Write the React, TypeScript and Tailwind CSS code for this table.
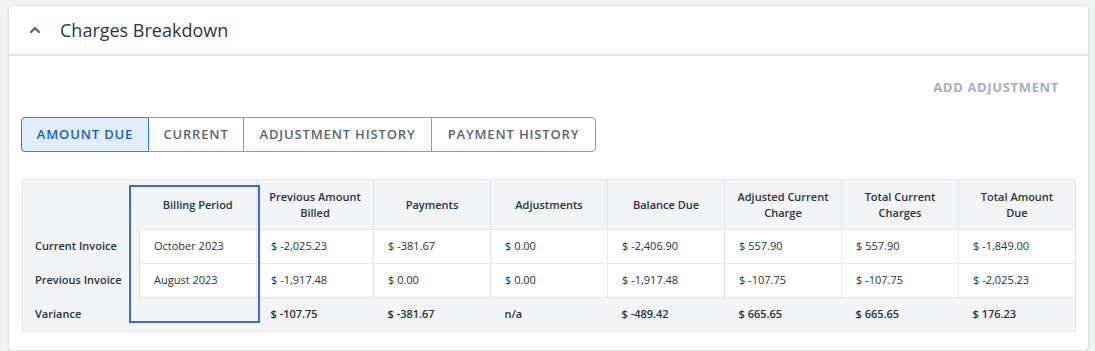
import React, { useState } from 'react';
import { ChevronUp } from 'lucide-react';

const tabs = [
  { label: 'AMOUNT DUE', w: 'w-[128px]' },
  { label: 'CURRENT', w: 'w-[96px]' },
  { label: 'ADJUSTMENT HISTORY', w: 'w-[189px]' },
  { label: 'PAYMENT HISTORY', w: 'w-[165px]' },
];

const headers = [
  'Billing Period',
  'Previous Amount Billed',
  'Payments',
  'Adjustments',
  'Balance Due',
  'Adjusted Current Charge',
  'Total Current Charges',
  'Total Amount Due',
];

const rows = [
  {
    label: 'Current Invoice',
    values: ['October 2023', '$ -2,025.23', '$ -381.67', '$ 0.00', '$ -2,406.90', '$ 557.90', '$ 557.90', '$ -1,849.00'],
  },
  {
    label: 'Previous Invoice',
    values: ['August 2023', '$ -1,917.48', '$ 0.00', '$ 0.00', '$ -1,917.48', '$ -107.75', '$ -107.75', '$ -2,025.23'],
  },
];

const variance = ['', '$ -107.75', '$ -381.67', 'n/a', '$ -489.42', '$ 665.65', '$ 665.65', '$ 176.23'];

export default function App() {
  const [active, setActive] = useState(0);

  return (
    <div className="min-h-[351px] bg-[#f1f2f2] pt-[5px] pl-[8px] pr-[6px] font-['Open_Sans',sans-serif] text-[#2b3340]">
      <div className="bg-white border border-[#e1e3e5] rounded-[5px] shadow-[0_1px_2px_rgba(0,0,0,0.12)]">
        {/* header */}
        <div className="h-[50px] flex items-center border-b-2 border-[#e2e5e9]">
          <div className="w-[51px] flex justify-center pl-[1px]">
            <ChevronUp className="w-4 h-4 text-[#4a5b72]" strokeWidth={3} />
          </div>
          <h2 className="text-[18px] text-[#2d3645] leading-none">Charges Breakdown</h2>
        </div>

        <div className="px-[12px] pt-[22px] pb-[18px]">
          <div className="flex justify-end pr-[17px]">
            <button className="text-[13px] leading-[18px] font-bold tracking-[0.05em] text-[#a7afbb]">
              ADD ADJUSTMENT
            </button>
          </div>

          {/* tabs */}
          <div className="mt-[21px] flex">
            {tabs.map((t, i) => (
              <button
                key={t.label}
                onClick={() => setActive(i)}
                className={
                  'h-[35px] text-center text-[13px] font-semibold tracking-[0.065em] border ' +
                  t.w +
                  ' ' +
                  (i === 0 ? 'rounded-l-[4px] ' : '-ml-px ') +
                  (i === tabs.length - 1 ? 'rounded-r-[4px] ' : '') +
                  (i === active
                    ? 'relative z-10 bg-[#e2edfc] border-[#3a7bd5] text-[#1d5cbd]'
                    : 'bg-white border-[#8f9aab] text-[#5b6472]')
                }
              >
                {t.label}
              </button>
            ))}
          </div>

          {/* table */}
          <div className="relative mt-[27px] ml-px">
            <table className="w-full table-fixed border-collapse bg-[#f2f4f6] border border-[#e3e7eb] text-[11px]">
              <thead>
                <tr className="h-[50px]">
                  <th className="w-[117px]"></th>
                  {headers.map((h, i) => (
                    <th
                      key={h}
                      className={
                        'font-semibold leading-[16px] px-3 text-center ' +
                        (i > 0 ? 'border-l border-[#e3e7eb]' : '')
                      }
                    >
                      {h}
                    </th>
                  ))}
                </tr>
              </thead>
              <tbody>
                {rows.map((r) => (
                  <tr key={r.label} className="h-[34px]">
                    <td className="pl-3 font-semibold">{r.label}</td>
                    {r.values.map((v, i) => (
                      <td key={i} className="bg-white border border-[#e3e7eb] pl-[14px]">
                        {v}
                      </td>
                    ))}
                  </tr>
                ))}
                <tr className="h-[34px]">
                  <td className="pl-3 font-semibold">Variance</td>
                  {variance.map((v, i) => (
                    <td key={i} className="pl-[14px] font-semibold">
                      {v}
                    </td>
                  ))}
                </tr>
              </tbody>
            </table>
            <div className="absolute left-[107px] top-[6px] w-[131px] h-[138px] border-2 border-[#3f66de] pointer-events-none"></div>
          </div>
        </div>
      </div>
    </div>
  );
}
